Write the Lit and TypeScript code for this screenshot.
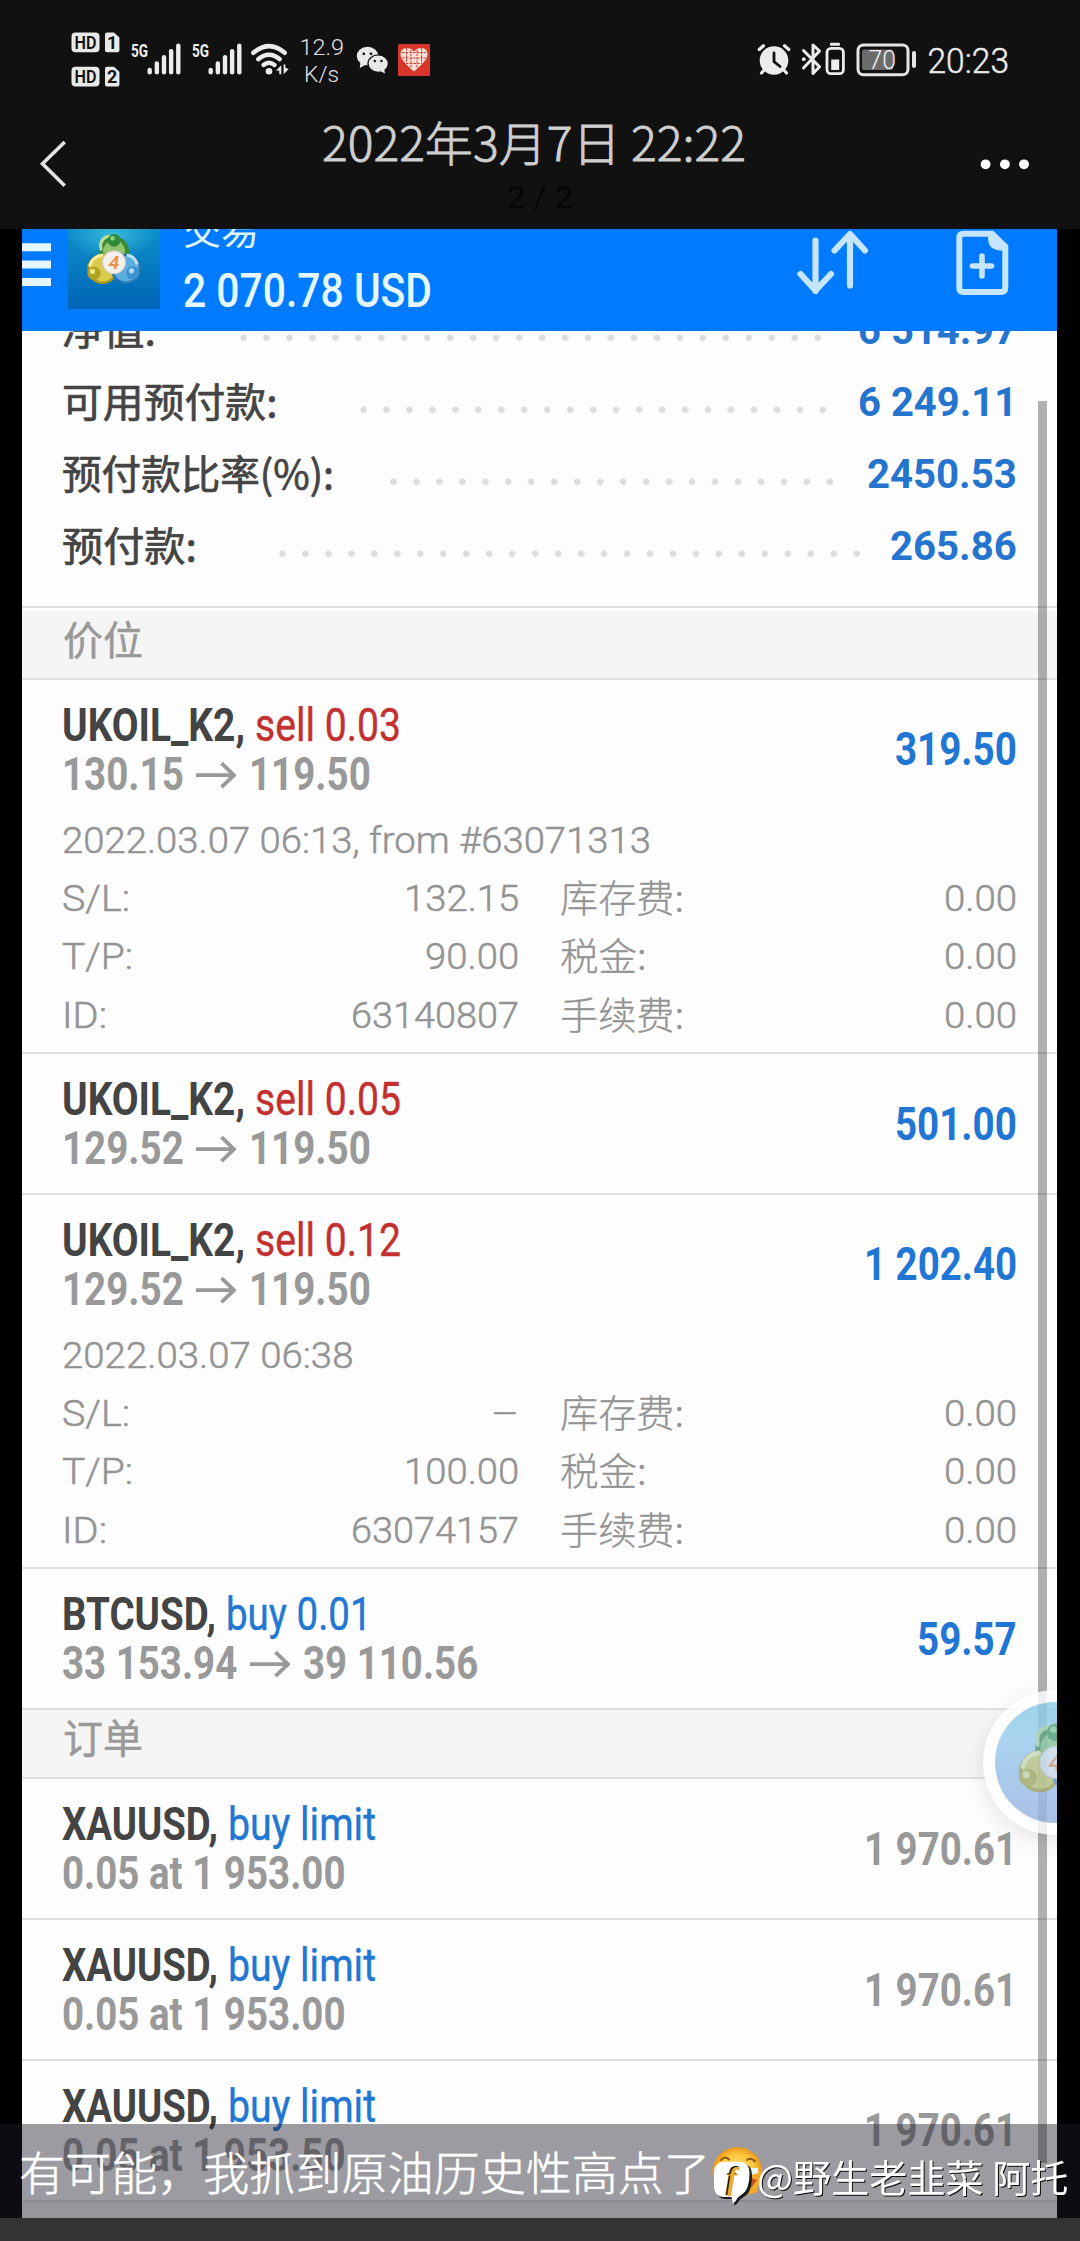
import { LitElement, html, svg, css, nothing, SVGTemplateResult, TemplateResult } from "lit";
import { customElement, property } from "lit/decorators.js";

/** A single line of text set to an exact advance width. */
const line = (cls: string, text: string, width: number, height: number, base: number): TemplateResult => html`
  <svg class="line ${cls}" width=${width} height=${height}>
    <text x="0" y=${base} textLength=${width} lengthAdjust="spacingAndGlyphs">${text}</text>
  </svg>`;

/** A tile of a bar, drawn in the coordinates of the whole screen. */
const tile = (x: number, y: number, w: number, h: number, body: SVGTemplateResult): TemplateResult => html`
  <svg class="tile" width=${w} height=${h} viewBox="${x} ${y} ${w} ${h}">${body}</svg>`;

/** Advance width of a number: digits, dots and spaces each have their own width. */
const numWidth = (s: string, digit: number, dot: number, space: number): number =>
  [...s].reduce((sum, c) => sum + (c === "." ? dot : c === " " ? space : digit), 0);

const bold = (s: string) => numWidth(s, 22.1, 11.3, 9.2);
const mid = (s: string) => numWidth(s, 23, 11.8, 9.4);
const thin = (s: string) => numWidth(s, 21, 10.2, 9);

const logo = svg`
  <g stroke-linecap="round">
    <circle cx="0" cy="-11" r="13" fill="#8fc46f" stroke="#3b8a34" stroke-width="4"/>
    <circle cx="-11.5" cy="6.5" r="14" fill="#d9cb4c" stroke="#a99a1c" stroke-width="2.4"/>
    <circle cx="12" cy="6.5" r="14" fill="#5badde" stroke="#2577b4" stroke-width="2.4"/>
    <path d="M-13 -13 Q-15 -24 -5 -26" fill="none" stroke="#b9dd9c" stroke-width="3"/>
    <path d="M-24 3 Q-21 -6 -12 -7" fill="none" stroke="#f6efa4" stroke-width="3"/>
    <path d="M23 1 Q20 -6 14 -7" fill="none" stroke="#bfe2f8" stroke-width="3"/>
    <circle cx="0" cy="-22" r="6.4" fill="#2f8a3c"/>
    <circle cx="-1.5" cy="-24" r="2.4" fill="#8fd07f"/>
    <circle cx="-20" cy="11" r="6.6" fill="#b3a21f"/>
    <circle cx="-21.5" cy="9" r="2.6" fill="#efe58d"/>
    <circle cx="18.8" cy="10.5" r="6.6" fill="#3e90d0"/>
    <circle cx="17.5" cy="8.5" r="2.6" fill="#aedcf7"/>
    <circle cx="0" cy="0" r="11.6" fill="#f3f0ec" stroke="#cfc8be" stroke-width="1"/>
    <text x="0" y="6.500" text-anchor="middle" font-size="19" font-weight="600" font-style="italic" fill="#ee8f3f" font-family="Roboto, sans-serif">4</text>
  </g>`;

const hdTile = (y: number, n: string) => svg`
  <rect x="71.5" y=${y} width="28" height="19.6" rx="4" fill="#e9e9e9"/>
  <text x="74.500" y=${y + 16} textLength="22" lengthAdjust="spacingAndGlyphs" font-size="18.500" font-weight="600" fill="#111">HD</text>
  <path d="M107 ${y} h7 l5.4 5 v12.600 q0 2 -2 2 h-10.400 q-2 0 -2 -2 v-15.600 q0 -2 2 -2z" fill="#e9e9e9"/>
  <text x="112.200" y=${y + 16} text-anchor="middle" font-size="18" font-weight="700" fill="#111">${n}</text>`;

const signal = (x: number) => svg`
  <text x=${x} y="57.300" textLength="17" lengthAdjust="spacingAndGlyphs" font-size="19" font-weight="700" fill="#ececec">5G</text>
  ${[70, 63.5, 57.2, 51.2, 45.8].map((top, i) => svg`
    <path d="M${x + 18.7 + i * 7.15} ${top} V72.200" stroke="#ececec" stroke-width="4.400" stroke-linecap="round"/>`)}`;

interface Position {
  symbol: string; symbolW: number;
  side: "sell" | "buy"; action: string; actionW: number;
  from: string; to?: string; fromW?: number;
  value: string;
  date?: string; dateW?: number;
  left?: [string, number, string][];
}

@customElement("trade-card")
class TradeCard extends LitElement {
  @property({ attribute: false }) data!: Position;

  static styles = css`
    :host { display: block; flex: none; border-top: 2px solid #dfdfdf; box-sizing: border-box; height: 140.8px; padding: 23px 40px 0; }
    :host([open]) { height: 374.3px; }
    .line { display: block; overflow: visible; font-family: Roboto, "Noto Sans CJK SC", sans-serif; }
    .head { display: flex; justify-content: space-between; align-items: center; }
    .row { display: flex; }
    .symbol { font-size: 46px; font-weight: 700; fill: #444; margin-right: 9.5px; }
    .action { font-size: 46px; font-weight: 400; }
    .sell { fill: #c23030; stroke: #c23030; stroke-width: .4px; }
    .buy { fill: #2277d2; stroke: #2277d2; stroke-width: .4px; }
    .price { font-size: 46px; font-weight: 700; fill: #999; }
    .profit { font-size: 46px; font-weight: 700; fill: #2176d3; }
    .quote { font-size: 46px; font-weight: 700; fill: #999; }
    .arrow { display: block; margin: 0 13px 0 12.5px; }
    .details { margin-top: 8.800px; }
    .fine { font-size: 37.500px; font-weight: 300; fill: #939393; stroke: #939393; stroke-width: .5px; }
    .cjk { font-size: 37.500px; font-weight: 300; fill: #939393; stroke: #939393; stroke-width: .3px; font-family: "Noto Sans CJK SC", sans-serif; margin-left: -1.5px; }
    .grid { display: grid; grid-template-columns: 457px 456px; column-gap: 42px; }
    .cell { display: flex; justify-content: space-between; }
  `;

  render() {
    const d = this.data;
    const extra: [string, number][] = [["库存费:", 124], ["税金:", 86.5], ["手续费:", 124]];
    return html`
      <div class="head">
        <div>
          <div class="row">
            ${line("symbol", d.symbol, d.symbolW, 48.6, 38)}
            ${line(`action ${d.side}`, d.action, d.actionW, 48.6, 38)}
          </div>
          <div class="row">
            ${line("price", d.from, d.fromW ?? bold(d.from), 48.6, 38)}
            ${d.to ? html`
              <svg class="arrow" width="40" height="48.6" viewBox="0 0 40 48.6" fill="none" stroke="#999" stroke-width="3.800">
                <path d="M0 23.200H38M25.500 11.200L38 23.200L25.500 35.200"/>
              </svg>
              ${line("price", d.to, bold(d.to), 48.6, 38)}` : nothing}
          </div>
        </div>
        ${line(d.to ? "profit" : "quote", d.value, bold(d.value), 48.6, 38)}
      </div>
      ${d.date ? html`
        <div class="details">
          ${line("fine", d.date, d.dateW!, 58.2, 44)}
          <div class="grid">
            ${d.left!.map(([label, w, value], i) => html`
              <div class="cell">
                ${line("fine", label, w, 58.2, 44)}
                ${line("fine", value, value === "–" ? 28 : thin(value), 58.2, 44)}
              </div>
              <div class="cell">
                ${line("cjk", extra[i][0], extra[i][1], 58.2, 44.5)}
                ${line("fine", "0.00", thin("0.00"), 58.2, 44)}
              </div>`)}
          </div>
        </div>` : nothing}
    `;
  }
}

@customElement("app-root")
class AppRoot extends LitElement {
  static styles = css`
    :host { display: block; width: 1080px; height: 2241px; background: #000; overflow: hidden; font-family: Roboto, "Noto Sans CJK SC", sans-serif; }
    .page { position: relative; width: 1080px; height: 2241px; display: flex; flex-direction: column; overflow: hidden; }
    .line { display: block; overflow: visible; flex: none; }
    .tile { display: block; flex: none; overflow: visible; }
    .top { background: #111; height: 229px; flex: none; }
    .status { display: flex; padding: 30px 68px 0; height: 60px; }
    .spacer { flex: 1; }
    .titlebar { display: flex; height: 139px; }
    .titles { display: flex; flex-direction: column; width: 890px; padding-left: 232px; box-sizing: border-box; }
    .title { font-family: "Noto Sans CJK SC", sans-serif; font-size: 47px; fill: #cfcfcf; stroke: #cfcfcf; stroke-width: .8px; font-weight: 300; }
    .count { font-size: 31px; fill: #060606; margin-left: 185px; }
    .photo { position: relative; width: 1035px; height: 1989px; flex: none; margin-left: 22px; background: #fdfdfd; overflow: hidden; display: flex; flex-direction: column; }
    .appbar { height: 102.400px; flex: none; background: #007bff; display: flex; overflow: hidden; }
    .heading { width: 420px; padding-left: 21px; display: flex; flex-direction: column; }
    .sub { font-family: "Noto Sans CJK SC", sans-serif; font-size: 37px; fill: #dff4ff; font-weight: 400; }
    .balance { font-size: 48.800px; font-weight: 500; fill: #e6f8ff; }
    .account { height: 274.600px; flex: none; overflow: hidden; }
    .rows { margin: -37.400px 40px 0; }
    .entry { display: flex; height: 71.900px; }
    .label { font-family: "Noto Sans CJK SC", sans-serif; font-size: 40px; fill: #444; stroke: #444; stroke-width: .7px; }
    .dots { flex: none; margin-left: auto; height: 71.900px; background: radial-gradient(circle at 50% 43.700px, #dcdcdc 2.800px, transparent 3.700px) 0 0 / 22.970px 71.900px; }
    .amount { font-size: 40.300px; font-weight: 700; fill: #2574ce; }
    .section { flex: none; box-sizing: border-box; border-top: 2px solid #dfdfdf; background: #f5f5f5; padding-left: 40.5px; }
    .first { height: 72px; box-shadow: inset 0 3px #fdfdfd; }
    .second { height: 69.300px; }
    .tail { height: 20px; }
    .sec { font-family: "Noto Sans CJK SC", sans-serif; font-size: 40px; fill: #999; stroke: #999; stroke-width: .5px; }
    .scroll { position: absolute; left: 1016px; top: 172px; width: 9px; height: 1762px; background: rgba(0, 0, 0, .3); }
    .bubble { position: absolute; left: 960.500px; top: 1460.500px; width: 145px; height: 145px; border-radius: 50%; background: radial-gradient(circle, rgba(255, 255, 255, .3) 59px, rgba(255, 255, 255, .8) 61px); box-shadow: 0 6px 22px rgba(0, 0, 0, .1); }
    .foot { background: #333; height: 23px; flex: none; }
    .caption { position: absolute; left: 0; top: 2124px; width: 1080px; height: 94px; background: rgba(30, 28, 42, .435); display: flex; }
    .words { font-family: "Noto Sans CJK SC", sans-serif; font-size: 46px; fill: #fff; stroke: #fff; stroke-width: .5px; font-weight: 300; margin-left: 19px; }
    .mark { position: absolute; left: 757px; top: 2150px; font-family: "Noto Sans CJK SC", sans-serif; font-size: 37.500px; fill: #fff; filter: drop-shadow(1.500px 1.500px .5px rgba(0, 0, 0, .9)); }
    .badge { position: absolute; left: 706px; top: 2140px; }
  `;

  private entries: [string, number, number, number, string][] = [
    ["净值:", 94, 26, 29, "6 514.97"],
    ["可用预付款:", 215.5, 21, 23.6, "6 249.11"],
    ["预付款比率(%):", 272, 20, 26, "2450.53"],
    ["预付款:", 135, 26, 21.5, "265.86"],
  ];

  private positions: Position[] = [
    { symbol: "UKOIL_K2,", symbolW: 183, side: "sell", action: "sell 0.03", actionW: 146, from: "130.15", to: "119.50", value: "319.50",
      date: "2022.03.07 06:13, from #63071313", dateW: 589,
      left: [["S/L:", 68, "132.15"], ["T/P:", 71, "90.00"], ["ID:", 45, "63140807"]] },
    { symbol: "UKOIL_K2,", symbolW: 183, side: "sell", action: "sell 0.05", actionW: 146, from: "129.52", to: "119.50", value: "501.00" },
    { symbol: "UKOIL_K2,", symbolW: 183, side: "sell", action: "sell 0.12", actionW: 146, from: "129.52", to: "119.50", value: "1 202.40",
      date: "2022.03.07 06:38", dateW: 291.5,
      left: [["S/L:", 68, "–"], ["T/P:", 71, "100.00"], ["ID:", 45, "63074157"]] },
    { symbol: "BTCUSD,", symbolW: 154, side: "buy", action: "buy 0.01", actionW: 145.5, from: "33 153.94", to: "39 110.56", value: "59.57" },
  ];

  private orders: Position[] = ["0.05 at 1 953.00", "0.05 at 1 953.00", "0.05 at 1 953.50"].map((from) => ({
    symbol: "XAUUSD,", symbolW: 156, side: "buy", action: "buy limit", actionW: 148, from, fromW: 283.5, value: "1 970.61",
  }));

  private statusBar() {
    const s = (x: number, w: number, body: SVGTemplateResult) => tile(x, 30, w, 60, body);
    return html`
      <div class="status">
        ${s(68, 58, svg`${hdTile(32.6, "1")}${hdTile(66.8, "2")}`)}
        ${s(126, 60, signal(131))}
        ${s(186, 60, signal(192))}
        ${s(246, 46, svg`
          <g fill="none" stroke="#ececec" stroke-width="4.400" stroke-linecap="round">
            <path d="M253.300 52.800Q269 39.500 284.700 52.800"/>
            <path d="M258.200 59.200Q269 50.200 279.800 59.200"/>
            <path d="M263.500 65Q269 60.600 274.500 65"/>
          </g>
          <circle cx="269" cy="71.300" r="3.300" fill="#ececec"/>
          <path d="M281.300 65.300V74.300H279.300V70.800L276 70.500ZM283.600 74.300V64.500H285.400V67.700L288.800 69Z" fill="#ececec"/>`)}
        ${s(292, 58, svg`
          <text x="299.500" y="54.500" textLength="44.500" lengthAdjust="spacingAndGlyphs" font-size="22" font-weight="350" fill="#e2e2e2">12.9</text>
          <text x="304" y="82" textLength="35" lengthAdjust="spacingAndGlyphs" font-size="22.500" font-weight="350" fill="#e2e2e2">K/s</text>`)}
        ${s(350, 43, svg`
          <ellipse cx="367.500" cy="56" rx="10.700" ry="9.300" fill="#e9e9e9"/>
          <path d="M360.500 61L359.800 68L367 64Z" fill="#e9e9e9"/>
          <ellipse cx="378.200" cy="63.600" rx="10.200" ry="8.700" fill="#e9e9e9" stroke="#111" stroke-width="1.300"/>
          <path d="M380 71L385 73.500L384 68Z" fill="#e9e9e9"/>
          <g fill="#111"><circle cx="363.800" cy="53.800" r="1.400"/><circle cx="371" cy="53.800" r="1.400"/><circle cx="374.800" cy="61" r="1.200"/><circle cx="381.400" cy="61" r="1.200"/></g>`)}
        ${s(393, 42, svg`
          <rect x="398" y="44" width="32" height="32" rx="1.500" fill="#d8362a"/>
          <path d="M414 71.500C408 66 400.500 60 400.500 54.500C400.500 47 409.500 46 414 51.500C418.500 46 427.500 47 427.500 54.500C427.500 60 420 66 414 71.500Z" fill="#f7dfd6"/>
          <path d="M402 52.500H426M402 58H426M406 63.500H422M406.500 48V63M411 50V68M417 50V68M421.500 48V63" stroke="#d8362a" stroke-width="1" stroke-dasharray="2.500 1.200" fill="none"/>`)}
        <div class="spacer"></div>
        ${s(755, 42, svg`
          <circle cx="774" cy="60.500" r="14.300" fill="#ececec"/>
          <g stroke="#ececec" stroke-width="3.200" stroke-linecap="round" fill="none"><path d="M759.200 49.500L763.500 45.800M784.500 45.800L788.800 49.500M765 69L761.500 73M783 69L786.500 73"/></g>
          <path d="M774 53V61.500L780 66.500" fill="none" stroke="#111" stroke-width="2.800" stroke-linecap="round"/>`)}
        ${s(797, 26, svg`
          <path d="M803.500 50.500L819.500 66.800L813 73.500V45L819.500 51L803.500 68" fill="none" stroke="#ececec" stroke-width="3" stroke-linejoin="round" stroke-linecap="round"/>
          <circle cx="803.800" cy="59.200" r="1.900" fill="#ececec"/>`)}
        ${s(823, 27, svg`
          <rect x="830" y="42.700" width="10" height="3" rx="1" fill="#ececec"/>
          <rect x="827" y="48.300" width="16.400" height="25.400" rx="4" fill="none" stroke="#ececec" stroke-width="2.800"/>
          <rect x="831.200" y="59.500" width="8" height="10.500" fill="#ececec"/>`)}
        ${s(850, 72, svg`
          <rect x="858" y="45" width="50" height="29.700" rx="5.500" fill="none" stroke="#e6e6e6" stroke-width="3"/>
          <rect x="862" y="49.500" width="31" height="20.500" rx="2" fill="#6b6b6b"/>
          <rect x="912" y="51" width="4" height="17" rx="2" fill="#e6e6e6"/>
          <text x="868.500" y="68.600" textLength="27.500" lengthAdjust="spacingAndGlyphs" font-size="26" font-weight="300" fill="#f2f2f2">70</text>`)}
        ${s(922, 90, svg`<text x="927.500" y="72.700" textLength="81.500" lengthAdjust="spacingAndGlyphs" font-size="34.700" font-weight="300" fill="#ececec" stroke="#ececec" stroke-width=".4">20:23</text>`)}
      </div>`;
  }

  render() {
    return html`
      <div class="page">
        <div class="top">
          ${this.statusBar()}
          <div class="titlebar">
            ${tile(0, 90, 90, 139, svg`<path d="M64.700 142L42.500 163.700L64.700 185.700" fill="none" stroke="#e4e4e4" stroke-width="3.600"/>`)}
            <div class="titles">
              ${line("title", "2022年3月7日 22:22", 424, 90, 71.3)}
              ${line("count", "2 / 2", 66, 49, 27.7)}
            </div>
            ${tile(980, 90, 100, 139, svg`<g fill="#fff"><circle cx="985.600" cy="164.300" r="4.900"/><circle cx="1004.900" cy="164.300" r="4.900"/><circle cx="1024" cy="164.300" r="4.900"/></g>`)}
          </div>
        </div>

        <div class="photo">
          <div class="appbar">
            ${tile(22, 229, 140, 102, svg`
              <defs><linearGradient id="sea" x1="0" y1="0" x2="0" y2="1"><stop offset="0" stop-color="#0d90c9"/><stop offset="1" stop-color="#0064b6"/></linearGradient>
              <radialGradient id="glow"><stop offset="0" stop-color="#43c3e0" stop-opacity=".8"/><stop offset="1" stop-color="#43c3e0" stop-opacity="0"/></radialGradient></defs>
              <path d="M22 247.300H51M22 264.500H51M22 282H51" stroke="#e4f6ff" stroke-width="8"/>
              <rect x="68" y="229" width="92" height="80" fill="url(#sea)"/>
              <ellipse cx="112" cy="234" rx="44" ry="26" fill="url(#glow)"/>
              <g transform="translate(114 262.300)">${logo}</g>`)}
            <div class="heading">
              ${line("sub", "交易", 76, 20, 16)}
              ${line("balance", "2 070.78 USD", 249, 80, 58)}
            </div>
            <div class="spacer"></div>
            ${tile(790, 229, 90, 102, svg`
              <g fill="none" stroke="#c6e5ff" stroke-width="6.200" stroke-linecap="round" stroke-linejoin="round">
                <path d="M815.500 240.500V291M800.500 274L815.500 290.500L831 274"/>
                <path d="M850 285.500V235M834.500 250.500L850 234L865 250.500"/>
              </g>`)}
            ${tile(880, 229, 177, 102, svg`
              <path d="M963.500 233.700H992L1005.300 246.500V287.500Q1005.300 292 1001 292H963.500Q959.300 292 959.300 287.500V238Q959.300 233.700 963.500 233.700Z" fill="none" stroke="#c6e5ff" stroke-width="6"/>
              <path d="M988 232H993L1007.500 246V250.500H999Q988 249 988 239Z" fill="#c6e5ff"/>
              <path d="M982 256V276M972.500 266H991.500" stroke="#c6e5ff" stroke-width="5.600" stroke-linecap="round"/>`)}
          </div>

          <div class="account">
            <div class="rows">
              ${this.entries.map(([label, w, n, gap, value]) => html`
                <div class="entry">
                  ${line("label", label, w, 71.9, 50.5)}
                  <div class="dots" style="width:${n * 22.97}px;margin-right:${gap}px"></div>
                  ${line("amount", value, mid(value), 71.9, 50)}
                </div>`)}
            </div>
          </div>

          <div class="section first">${line("sec", "价位", 80, 60, 47)}</div>
          ${this.positions.map((p) => html`<trade-card .data=${p} ?open=${!!p.date}></trade-card>`)}
          <div class="section second">${line("sec", "订单", 80, 60, 43)}</div>
          ${this.orders.map((p) => html`<trade-card .data=${p}></trade-card>`)}
          <div class="section tail"></div>

          <div class="scroll"></div>
          <div class="bubble">
            <svg width="145" height="145" viewBox="0 0 145 145">
              <defs><linearGradient id="sky" x1="0" y1="0" x2="0" y2="1"><stop offset="0" stop-color="#7cc8e2"/><stop offset=".3" stop-color="#8fc6ec"/><stop offset="1" stop-color="#8dabdd"/></linearGradient></defs>
              <circle cx="72.500" cy="72.500" r="60.500" fill="url(#sky)" opacity=".74"/>
              <g transform="translate(72.500 72.500) scale(1.370)" opacity=".5">${logo}</g>
            </svg>
          </div>
        </div>
        <div class="foot"></div>

        <div class="caption">${line("words", "有可能，我抓到原油历史性高点了", 691, 94, 66)}</div>
        <svg class="badge" width="60" height="70" viewBox="706 2140 60 70">
          <defs><radialGradient id="face"><stop offset="0" stop-color="#ffe27a"/><stop offset=".7" stop-color="#fcc93f"/><stop offset="1" stop-color="#e9971c"/></radialGradient></defs>
          <circle cx="737.300" cy="2172" r="25" fill="url(#face)"/>
          <path d="M721 2160Q725 2155.500 729 2159.500M747 2160Q751 2157 755 2161.500" fill="none" stroke="#8a5a14" stroke-width="2" stroke-linecap="round"/>
          <path d="M748 2178Q757 2170 760 2176L757 2192Q750 2196 743 2192Z" fill="#f0a92c"/>
          <path d="M751 2178V2188L757 2180Z" fill="#c2541c"/>
          <path d="M749 2168H758V2173L751 2175Z" fill="#e8f6ff"/>
          <path d="M727 2163.700H742Q752 2164 752 2175Q752 2192 745 2196Q741 2199 739.500 2200Q738.500 2203 734.500 2205.500L733 2199H726Q716 2199 716 2187V2175Q716 2164 727 2163.700Z" fill="#1c1c1c"/>
          <path d="M725 2161.700H739Q749.500 2162 749.500 2173Q749.500 2189 743 2193.500Q739 2196.500 737.500 2198Q736.500 2201 733 2203.500L731.500 2197H724Q714 2197 714 2185V2173Q714 2162 725 2161.700Z" fill="#fff"/>
          <text x="725.500" y="2187.500" font-family="Liberation Serif, serif" font-style="italic" font-weight="700" font-size="31" fill="#111">f</text>
          <text x="727" y="2189" font-family="Liberation Serif, serif" font-style="italic" font-weight="700" font-size="31" fill="#f2a92a">f</text>
        </svg>
        ${line("mark", "@野生老韭菜 阿托", 311.5, 60, 42)}
      </div>`;
  }
}
